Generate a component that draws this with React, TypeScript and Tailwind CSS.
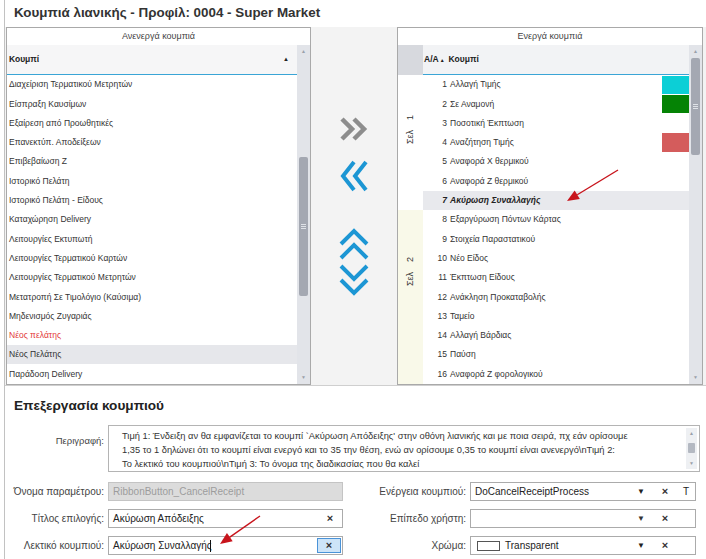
import React from "react";

const inactive = [
  "Διαχείριση Τερματικού Μετρητών",
  "Είσπραξη Καυσίμων",
  "Εξαίρεση από Προωθητικές",
  "Επανεκτύπ. Αποδείξεων",
  "Επιβεβαίωση Ζ",
  "Ιστορικό Πελάτη",
  "Ιστορικό Πελάτη - Είδους",
  "Καταχώρηση Delivery",
  "Λειτουργίες Εκτυπωτή",
  "Λειτουργίες Τερματικού Καρτών",
  "Λειτουργίες Τερματικού Μετρητών",
  "Μετατροπή Σε Τιμολόγιο (Καύσιμα)",
  "Μηδενισμός Ζυγαριάς",
  "Νέος πελάτης",
  "Νέος Πελάτης",
  "Παράδοση Delivery",
];

type ActiveRow = { n: number; label: string; swatch?: string; selected?: boolean };

const active: ActiveRow[] = [
  { n: 1, label: "Αλλαγή Τιμής", swatch: "bg-[#0ccfd6]" },
  { n: 2, label: "Σε Αναμονή", swatch: "bg-[#058305]" },
  { n: 3, label: "Ποσοτική Έκπτωση" },
  { n: 4, label: "Αναζήτηση Τιμής", swatch: "bg-[#d45c5c]" },
  { n: 5, label: "Αναφορά Χ θερμικού" },
  { n: 6, label: "Αναφορά Ζ θερμικού" },
  { n: 7, label: "Ακύρωση Συναλλαγής", selected: true },
  { n: 8, label: "Εξαργύρωση Πόντων Κάρτας" },
  { n: 9, label: "Στοιχεία Παραστατικού" },
  { n: 10, label: "Νέο Είδος" },
  { n: 11, label: "Έκπτωση Είδους" },
  { n: 12, label: "Ανάκληση Προκαταβολής" },
  { n: 13, label: "Ταμείο" },
  { n: 14, label: "Αλλαγή Βάρδιας" },
  { n: 15, label: "Παύση" },
  { n: 16, label: "Αναφορά Ζ φορολογικού" },
];

// vertical scrollbar of the grids, thumb offset passed as a full class name
function GridScroll({ thumb }: { thumb: string }) {
  return (
    <div className="w-[13px] shrink-0 bg-[#e2e4e9] flex flex-col items-center relative">
      <span className="text-[5px] leading-none text-[#9aa0aa] mt-[4px]">▲</span>
      <div className={`w-[9px] rounded-[2px] bg-[#a4a8b2] flex items-center justify-center ${thumb}`}>
        <div className="flex flex-col gap-[1px]">
          <div className="w-[5px] h-px bg-[#dfe2e7]" />
          <div className="w-[5px] h-px bg-[#dfe2e7]" />
          <div className="w-[5px] h-px bg-[#dfe2e7]" />
        </div>
      </div>
      <span className="text-[5px] leading-none text-[#9aa0aa] mt-auto mb-[4px]">▼</span>
    </div>
  );
}

function Chevrons({ dir, color }: { dir: "right" | "left" | "up" | "down"; color: string }) {
  const pts = {
    right: ["4,2 14,12 4,22", "16,2 26,12 16,22"],
    left: ["16,2 5,16 16,30", "28,2 17,16 28,30"],
    up: ["3,16 16,3 29,16", "3,30 16,17 29,30"],
    down: ["3,4 16,17 29,4", "3,18 16,31 29,18"],
  }[dir];
  const h = dir === "right" ? 24 : 34;
  return (
    <svg width="32" height={h} viewBox={`0 0 32 ${h}`} fill="none">
      {pts.map((p) => (
        <polyline key={p} points={p} stroke={color} strokeWidth={dir === "right" ? 4.5 : 4} strokeLinejoin="miter" />
      ))}
    </svg>
  );
}

function ClearBtn({ active }: { active?: boolean }) {
  return (
    <span
      className={
        active
          ? "w-[24px] h-[15px] mr-[1px] flex items-center justify-center border border-[#4a93d8] bg-[#cde4f8] text-[11px] font-bold text-[#333]"
          : "w-[24px] flex items-center justify-center text-[11px] font-bold text-[#333]"
      }
    >
      ×
    </span>
  );
}

function RedArrow({ className, x1, y1, x2, y2 }: { className: string; x1: number; y1: number; x2: number; y2: number }) {
  const dx = x2 - x1;
  const dy = y2 - y1;
  const len = Math.hypot(dx, dy);
  const ux = dx / len;
  const uy = dy / len;
  const bx = x2 - ux * 12;
  const by = y2 - uy * 12;
  const px = -uy * 5;
  const py = ux * 5;
  return (
    <svg className={className} width="80" height="50" viewBox="0 0 80 50">
      <line x1={x1} y1={y1} x2={bx} y2={by} stroke="#c8141c" strokeWidth="1.4" />
      <polygon points={`${x2},${y2} ${bx + px},${by + py} ${bx - px},${by - py}`} fill="#c8141c" />
    </svg>
  );
}

export default function App() {
  return (
    <div className="relative w-[706px] h-[559px] overflow-hidden bg-white font-['Liberation_Sans',Arial,sans-serif] text-[#333]">
      <div className="ml-[4px] h-full border-l border-[#c2c2c2] flex flex-col">
        {/* title */}
        <div className="h-[27px] pl-[9px] flex items-center text-[13.4px] font-bold text-[#333]">
          Κουμπιά λιανικής - Προφίλ: 0004 - Super Market
        </div>

        {/* top: two grids with move buttons */}
        <div className="h-[358px] bg-[#f3f3f3] flex">
          {/* inactive */}
          <div className="ml-[1px] w-[305px] border border-[#a9a9a9] bg-white flex flex-col">
            <div className="h-[17px] flex items-center justify-center text-[9px] text-[#444]">Ανενεργά κουμπιά</div>
            <div className="flex-1 flex">
              <div className="flex-1 flex flex-col">
                <div className="h-[30px] bg-[#f6f6f7] border-b border-[#3aa5d6] flex items-center pl-[2px] pr-[8px]">
                  <span className="text-[8.5px] font-bold text-[#222]">Κουμπί</span>
                  <span className="ml-auto text-[6px] text-[#222]">▲</span>
                </div>
                {inactive.map((name, i) => (
                  <div
                    key={i}
                    className={`h-[19.3px] flex items-center pl-[2px] text-[8.5px] ${i === 14 ? "bg-[#e6e7eb]" : ""} ${
                      i === 13 ? "text-[#e33a3a]" : "text-[#333]"
                    }`}
                  >
                    {name}
                  </div>
                ))}
              </div>
              <GridScroll thumb="mt-[103px] h-[139px]" />
            </div>
          </div>

          {/* move buttons */}
          <div className="w-[86px] flex flex-col items-center">
            <div className="mt-[90px]">
              <Chevrons dir="right" color="#8d8d8d" />
            </div>
            <div className="mt-[19px]">
              <Chevrons dir="left" color="#1c96d4" />
            </div>
            <div className="mt-[34px]">
              <Chevrons dir="up" color="#1c96d4" />
            </div>
            <div className="mt-[0px]">
              <Chevrons dir="down" color="#1c96d4" />
            </div>
          </div>

          {/* active */}
          <div className="w-[306px] border border-[#a9a9a9] bg-white flex flex-col">
            <div className="h-[17px] flex items-center justify-center text-[9px] text-[#444]">Ενεργά κουμπιά</div>
            <div className="flex-1 flex">
              <div className="flex-1 flex flex-col">
                <div className="h-[30px] flex">
                  <div className="w-[25px] bg-[#d7d9de]" />
                  <div className="flex-1 bg-[#f2f3f5] border-b border-[#3aa5d6] flex items-center pl-[1px] text-[8.5px] font-bold text-[#222]">
                    <span>A/A</span>
                    <span className="text-[5px] ml-[1px] mt-[2px]">▲</span>
                    <span className="ml-[4px]">Κουμπί</span>
                  </div>
                </div>
                <div className="flex-1 flex">
                  <div className="w-[25px] flex flex-col text-[9px] text-[#333]">
                    <div className="h-[135px] flex justify-center pt-[40px]">
                      <span className="[writing-mode:vertical-rl] rotate-180 h-fit whitespace-pre">{"Σελ    1"}</span>
                    </div>
                    <div className="flex-1 bg-[#f9f9e9] flex justify-center pt-[47px]">
                      <span className="[writing-mode:vertical-rl] rotate-180 h-fit whitespace-pre">{"Σελ    2"}</span>
                    </div>
                  </div>
                  <div className="flex-1 flex flex-col">
                    {active.map((r) => (
                      <div
                        key={r.n}
                        className={`h-[19.3px] flex items-center text-[8.5px] ${
                          r.selected ? "bg-[#e8e9ed] font-bold italic text-[#222]" : "text-[#333]"
                        }`}
                      >
                        <span className="w-[24px] text-right">{r.n}</span>
                        <span className="ml-[3px]">{r.label}</span>
                        {r.swatch && <span className={`ml-auto w-[27px] h-[18.3px] ${r.swatch}`} />}
                      </div>
                    ))}
                  </div>
                </div>
              </div>
              <GridScroll thumb="mt-[4px] h-[97px]" />
            </div>
          </div>
        </div>

        {/* editor */}
        <div className="flex-1 border-t border-[#cfcfcf] flex flex-col">
          <div className="h-[18px] mt-[11px] pl-[9px] flex items-center text-[13.6px] font-bold text-[#222]">
            Επεξεργασία κουμπιού
          </div>

          <div className="mt-[10px] flex">
            <div className="w-[99px] pt-[9px] text-right text-[9.5px] text-[#444]">Περιγραφή:</div>
            <div className="ml-[4px] w-[592px] h-[47px] border border-[#b4b4b4] flex">
              <div className="flex-1 pl-[13px] pt-[3px] text-[9.3px] leading-[14px] text-[#333] whitespace-nowrap">
                <div>Τιμή 1: Ένδειξη αν θα εμφανίζεται το κουμπί `Ακύρωση Απόδειξης' στην οθόνη λιανικής και με ποια σειρά, πχ εάν ορίσουμε</div>
                <div>1,35 το 1 δηλώνει ότι το κουμπί είναι ενεργό και το 35 την θέση, ενώ αν ορίσουμε 0,35 το κουμπί είναι ανενεργό\nΤιμή 2:</div>
                <div>Το λεκτικό του κουμπιού\nΤιμή 3: Το όνομα της διαδικασίας που θα καλεί</div>
              </div>
              <div className="w-[11px] my-[2px] mr-[2px] bg-[#eef0f3] flex flex-col items-center">
                <span className="text-[5px] leading-none text-[#9aa0aa] mt-[3px]">▲</span>
                <div className="mt-[7px] w-[7px] h-[10px] rounded-[1px] bg-[#b4b9c2]" />
                <span className="text-[5px] leading-none text-[#9aa0aa] mt-auto mb-[3px]">▼</span>
              </div>
            </div>
          </div>

          <div className="mt-[10px] grid grid-cols-[350px_346px] gap-y-[8px] text-[10px]">
            {/* row 1 */}
            <div className="flex items-center">
              <span className="w-[99px] text-right text-[#444]">Όνομα παραμέτρου:</span>
              <div className="ml-[4px] w-[235px] h-[19px] border border-[#c4c4c4] bg-[#dcdcdc] flex items-center pl-[4px] text-[#9c9c9c]">
                RibbonButton_CancelReceipt
              </div>
            </div>
            <div className="flex items-center">
              <span className="w-[111px] text-right text-[#444]">Ενέργεια κουμπιού:</span>
              <div className="ml-[4px] w-[226px] h-[19px] border border-[#ababab] flex items-center pl-[4px] text-[#222]">
                <span className="flex-1">DoCancelReceiptProcess</span>
                <span className="w-[24px] text-center text-[8px]">▼</span>
                <ClearBtn />
                <span className="w-[18px] text-center text-[10px]">T</span>
              </div>
            </div>

            {/* row 2 */}
            <div className="flex items-center">
              <span className="w-[99px] text-right text-[#444]">Τίτλος επιλογής:</span>
              <div className="ml-[4px] w-[235px] h-[19px] border border-[#ababab] flex items-center pl-[4px] text-[#222]">
                <span className="flex-1">Ακύρωση Απόδειξης</span>
                <ClearBtn />
              </div>
            </div>
            <div className="flex items-center">
              <span className="w-[111px] text-right text-[#444]">Επίπεδο χρήστη:</span>
              <div className="ml-[4px] w-[226px] h-[19px] border border-[#ababab] flex items-center pl-[4px]">
                <span className="flex-1" />
                <span className="w-[24px] text-center text-[8px]">▼</span>
                <ClearBtn />
                <span className="w-[18px]" />
              </div>
            </div>

            {/* row 3 */}
            <div className="flex items-center">
              <span className="w-[99px] text-right text-[#444]">Λεκτικό κουμπιού:</span>
              <div className="ml-[4px] w-[235px] h-[19px] border border-[#ababab] flex items-center pl-[4px] text-[#222]">
                <span className="flex-1 flex items-center">
                  Ακύρωση Συναλλαγής
                  <span className="-ml-[2px] w-px h-[12px] bg-[#111]" />
                </span>
                <ClearBtn active />
              </div>
            </div>
            <div className="flex items-center">
              <span className="w-[111px] text-right text-[#444]">Χρώμα:</span>
              <div className="ml-[4px] w-[226px] h-[19px] border border-[#ababab] flex items-center pl-[6px] text-[#222]">
                <span className="w-[23px] h-[10px] border border-[#555] bg-white" />
                <span className="ml-[5px] flex-1">Transparent</span>
                <span className="w-[24px] text-center text-[8px]">▼</span>
                <ClearBtn />
                <span className="w-[18px]" />
              </div>
            </div>
          </div>
        </div>
      </div>

      {/* annotation arrows */}
      <RedArrow className="absolute left-[556px] top-[162px]" x1={62} y1={8} x2={11} y2={39} />
      <RedArrow className="absolute left-[210px] top-[506px]" x1={50} y1={10} x2={10} y2={38} />
    </div>
  );
}
